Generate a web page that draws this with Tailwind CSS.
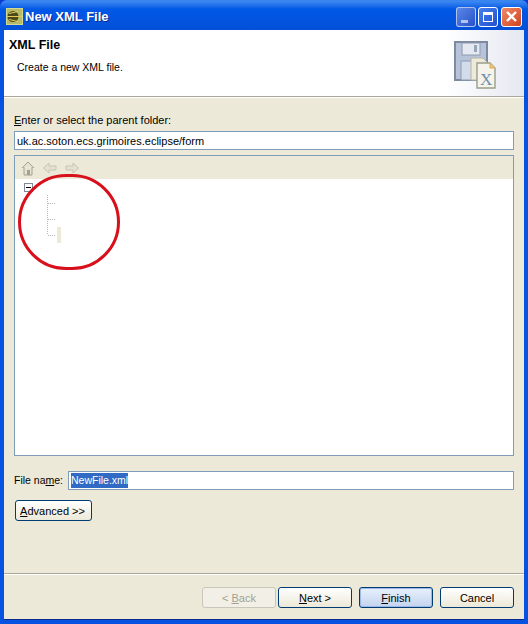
<!DOCTYPE html>
<html lang="en">
  <head>
    <meta charset="UTF-8" />
    <script src="https://cdn.jsdelivr.net/npm/@tailwindcss/browser@4"></script>
    <title>New XML File</title>
  </head>
  <body class="bg-[#0a3ad0]">
    <div class="flex flex-col w-[528px] h-[624px] overflow-hidden rounded-t-[7px] bg-[#0553e0] font-['Liberation_Sans',sans-serif] text-[11px] text-black">
      <!-- title bar -->
      <div class="flex items-center h-[30px] shrink-0 pt-[3px] pl-[6px] pr-[6px] bg-gradient-to-b from-[#3a86f0] from-[5%] via-[#0058e6] via-[30%] to-[#0450d8]">
        <svg width="17" height="17" viewBox="0 0 17 17" class="shrink-0">
          <rect width="17" height="17" fill="#d6d88e" />
          <rect x="1" y="1" width="15" height="15" fill="#b4bc6c" />
          <circle cx="7" cy="8.5" r="5.5" fill="#4a4a1c" />
          <path d="M1 8.5H16M3 5.5L12 3.5M3 11.5L12 13.5" stroke="#e8c850" stroke-width="1" fill="none" />
        </svg>
        <span class="ml-[2px] font-bold text-[13px] text-white [text-shadow:1px_1px_#0a2a90]">New XML File</span>
        <div class="ml-auto flex gap-[2px]">
          <div class="relative w-[20px] h-[20px] rounded-[3px] border border-white/60 bg-gradient-to-br from-[#5a88e8] to-[#2a50c8]">
            <div class="absolute left-[4px] bottom-[3px] w-[7px] h-[3px] bg-white/60"></div>
          </div>
          <div class="w-[20px] h-[20px] p-[4px] rounded-[3px] border border-white bg-gradient-to-br from-[#4a80ec] to-[#2050d0]">
            <div class="w-full h-full border border-white border-t-[3px]"></div>
          </div>
          <div class="flex items-center justify-center w-[21px] h-[20px] ml-[1px] rounded-[3px] border border-white bg-gradient-to-br from-[#ee8a68] to-[#d04018]">
            <svg width="13" height="13" viewBox="0 0 13 13">
              <path d="M2 2L11 11M11 2L2 11" stroke="#fff" stroke-width="2.4" fill="none" />
            </svg>
          </div>
        </div>
      </div>

      <div class="flex flex-col flex-1 mx-[4px] mb-[4px] bg-[#ece9d8] border-b border-[#0a2a90]">
        <!-- header -->
        <div class="relative flex flex-col h-[66px] shrink-0 pl-[5px] bg-gradient-to-r from-white from-[85%] to-[#e4e8f0]">
          <span class="mt-[8px] font-bold text-[12.5px] leading-[14px]">XML File</span>
          <span class="mt-[8px] ml-[8px] text-[10.5px] leading-[14px]">Create a new XML file.</span>
          <svg width="44" height="48" viewBox="0 0 44 48" class="absolute left-[450px] top-[11px]">
            <path d="M1 1H33V39H1Z" fill="#b7c3d8" stroke="#7d8a9f" stroke-width="2" />
            <rect x="8" y="2" width="18" height="12" fill="#e4e9f2" stroke="#8e9ab0" />
            <rect x="20" y="4" width="3" height="7" fill="#98a4ba" />
            <rect x="7" y="20" width="21" height="19" fill="#d3dcea" stroke="#8e9ab0" />
            <path d="M17 17H29L33 21V39H17Z" fill="#eeeadb" stroke="#b4b4a4" />
            <path d="M23 22H36L41 27V47H23Z" fill="#f6f4ea" stroke="#9a9e8a" stroke-width="1.4" />
            <path d="M36 22V27H41" fill="#f0c878" stroke="#d8a858" />
            <text x="26" y="44" font-family="Liberation Serif" font-size="17" fill="#6c90b0">X</text>
          </svg>
        </div>
        <div class="h-[2px] shrink-0 bg-[#aca899] border-b border-white"></div>

        <!-- body -->
        <div class="flex flex-col flex-1 px-[10px]">
          <label class="mt-[15px] leading-[14px]"><u>E</u>nter or select the parent folder:</label>
          <div class="flex items-center h-[19px] mt-[4px] pt-[1px] px-[2px] bg-white border border-[#7f9db9]">uk.ac.soton.ecs.grimoires.eclipse/form</div>

          <div class="relative flex flex-col h-[301px] mt-[5px] bg-white border border-[#7f9db9]">
            <div class="flex items-center h-[23px] gap-[6px] pl-[5px] bg-[#ece9d8]">
              <svg width="16" height="16" viewBox="0 0 16 16">
                <path d="M2 8L8 2L14 8M4 7V15H12V7" fill="#e6e3d2" stroke="#a5a294" />
                <rect x="7" y="10" width="3" height="5" fill="#a5a294" />
              </svg>
              <svg width="16" height="16" viewBox="0 0 16 16">
                <path d="M1.5 8L7 3V6H14V10H7V13Z" fill="#e4e1d0" stroke="#c8c5b4" />
              </svg>
              <svg width="16" height="16" viewBox="0 0 16 16">
                <path d="M14.5 8L9 3V6H2V10H9V13Z" fill="#e4e1d0" stroke="#c8c5b4" />
              </svg>
            </div>
            <!-- tree -->
            <svg width="60" height="80" viewBox="0 0 60 80" class="absolute left-[0px] top-[23px]">
              <rect x="9.5" y="4.5" width="8" height="8" fill="#fff" stroke="#7f8a9c" />
              <path d="M11 8.5H16" stroke="#000" />
              <path d="M32.5 16V56M33 24.5H41M33 40.5H41M33 56.5H41" stroke="#b4b4b4" stroke-dasharray="1 1" fill="none" />
              <rect x="42" y="48" width="4" height="16" fill="#ece9d8" />
            </svg>
            <!-- red circle drawn over the tree -->
            <div class="absolute left-[3px] top-[18px] w-[102px] h-[96px] rounded-full border-[3px] border-[#d8101c]"></div>
          </div>

          <div class="flex items-center mt-[15px] h-[19px] text-[10.5px]">
            <label class="w-[54px] shrink-0">File na<u>m</u>e:</label>
            <div class="flex items-center flex-1 h-[19px] px-[2px] bg-white border border-[#7f9db9]">
              <span class="bg-[#316ac5] text-white">NewFile.xml</span>
            </div>
          </div>

          <div class="flex items-center justify-center w-[77px] h-[21px] mt-[10px] ml-[1px] pt-[1px] pr-[2px] rounded-[3px] border border-[#003c74] bg-gradient-to-b from-white to-[#ece9d8]"><span><u>A</u>dvanced &gt;&gt;</span></div>
        </div>

        <!-- button bar -->
        <div class="h-[2px] shrink-0 bg-[#aca899] border-b border-white"></div>
        <div class="flex justify-end gap-[2px] h-[44px] shrink-0 pt-[12px] pr-[10px]">
          <div class="flex items-center justify-center w-[74px] h-[21px] pt-[1px] rounded-[3px] border border-[#c9c7ba] bg-[#f2f0e6] text-[#a1a192]">&lt; <u class="ml-[3px]">B</u>ack</div>
          <div class="flex items-center justify-center w-[74px] h-[21px] pt-[1px] rounded-[3px] border border-[#003c74] bg-gradient-to-b from-white to-[#ece9d8]"><span><u>N</u>ext &gt;</span></div>
          <div class="flex items-center justify-center w-[74px] h-[21px] ml-[5px] pt-[1px] rounded-[3px] border border-[#003c74] bg-gradient-to-b from-[#e8f0fc] to-[#c4d4ee] shadow-[inset_0_0_0_1px_#9db8e6]"><span><u>F</u>inish</span></div>
          <div class="flex items-center justify-center w-[74px] h-[21px] ml-[5px] pt-[1px] rounded-[3px] border border-[#003c74] bg-gradient-to-b from-white to-[#ece9d8]">Cancel</div>
        </div>
      </div>
    </div>
  </body>
</html>
